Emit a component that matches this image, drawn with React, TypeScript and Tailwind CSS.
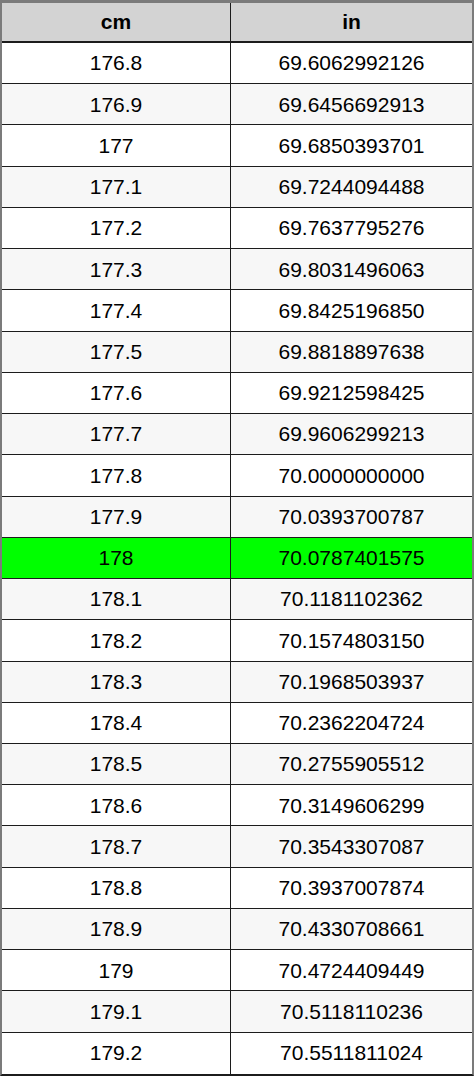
const START = 1768;
const CM_PER_IN = 2.54;

// 176.8 … 179.2 in steps of 0.1
const rows = Array.from({ length: 25 }, (_, i) => {
  const tenths = START + i;
  const cm = tenths / 10;
  const label = tenths % 10 === 0 ? String(tenths / 10) : cm.toFixed(1);
  return { cm: label, inch: (cm / CM_PER_IN).toFixed(10), highlight: tenths === 1780 };
});

export default function App() {
  return (
    <div className="w-[474px] h-[1077px] bg-white text-[21px] text-black font-['Liberation_Sans',Arial,sans-serif]">
      <div className="border-t-[3px] border-x-2 border-[#7b7b7b] border-b-2 border-b-[#1c1c1c]">
        {/* header */}
        <div className="flex h-[40px] bg-[#d3d3d3] border-b-2 border-[#1c1c1c] font-bold">
          <div className="w-[229px] flex items-center justify-center border-r-[1.5px] border-[#1c1c1c]">cm</div>
          <div className="flex-1 flex items-center justify-center">in</div>
        </div>

        {rows.map((row, i) => (
          <div
            key={row.cm}
            className={`flex h-[41.24px] ${i < rows.length - 1 ? 'border-b-[1.4px] border-[#1c1c1c]' : ''} ${
              row.highlight ? 'bg-[#00ff00]' : i % 2 === 0 ? 'bg-white' : 'bg-[#f7f7f7]'
            }`}
          >
            <div className="w-[229px] flex items-center justify-center border-r-[1.5px] border-[#1c1c1c]">{row.cm}</div>
            <div className="flex-1 flex items-center justify-center">{row.inch}</div>
          </div>
        ))}
      </div>
    </div>
  );
}
